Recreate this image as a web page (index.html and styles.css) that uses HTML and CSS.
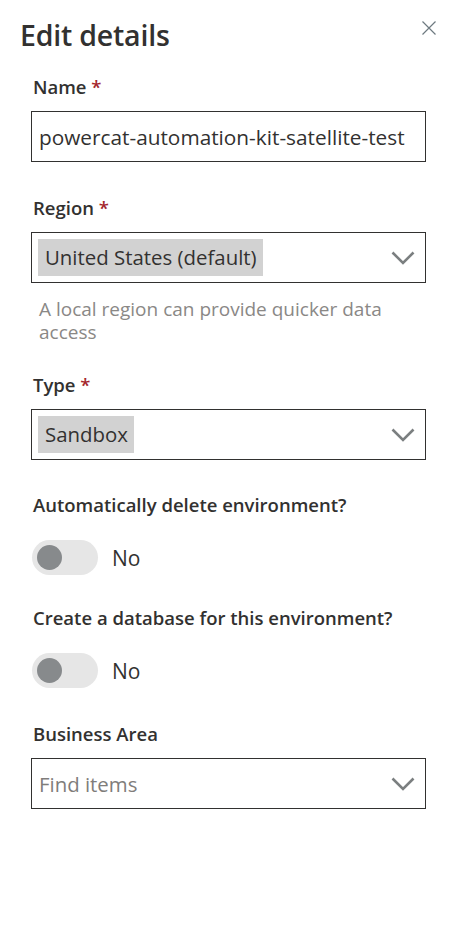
FILE: index.html
```html
<!DOCTYPE html>
<html lang="en">
<head>
<meta charset="utf-8">
<title>Edit details</title>
<link rel="stylesheet" href="styles.css">
</head>
<body>
<div class="panel">
  <div class="header">
    <h1 class="title">Edit details</h1>
    <button class="close" aria-label="Close">
      <svg width="14" height="14" viewBox="0 0 14 14"><path d="M0.5 0.5 L13.5 13.5 M13.5 0.5 L0.5 13.5" stroke="#6e7a80" stroke-width="1.2" fill="none"/></svg>
    </button>
  </div>

  <div class="field f-name">
    <div class="label">Name <span class="req">*</span></div>
    <div class="input"><span class="value">powercat-automation-kit-satellite-test</span></div>
  </div>

  <div class="field f-region">
    <div class="label">Region <span class="req">*</span></div>
    <div class="select">
      <span class="chip">United States (default)</span>
      <svg class="chev" width="24" height="14" viewBox="0 0 24 14"><path d="M1.5 1.5 L12 12 L22.5 1.5" stroke="#7b7f80" stroke-width="2.6" fill="none"/></svg>
    </div>
    <div class="help">A local region can provide quicker data access</div>
  </div>

  <div class="field f-type">
    <div class="label">Type <span class="req">*</span></div>
    <div class="select">
      <span class="chip">Sandbox</span>
      <svg class="chev" width="24" height="14" viewBox="0 0 24 14"><path d="M1.5 1.5 L12 12 L22.5 1.5" stroke="#7b7f80" stroke-width="2.6" fill="none"/></svg>
    </div>
  </div>

  <div class="field f-auto">
    <div class="label">Automatically delete environment?</div>
    <div class="toggle-row">
      <span class="toggle"><span class="knob"></span></span>
      <span class="toggle-text">No</span>
    </div>
  </div>

  <div class="field f-db">
    <div class="label">Create a database for this environment?</div>
    <div class="toggle-row">
      <span class="toggle"><span class="knob"></span></span>
      <span class="toggle-text">No</span>
    </div>
  </div>

  <div class="field f-area">
    <div class="label">Business Area</div>
    <div class="input combo">
      <span class="placeholder">Find items</span>
      <svg class="chev" width="24" height="14" viewBox="0 0 24 14"><path d="M1.5 1.5 L12 12 L22.5 1.5" stroke="#7b7f80" stroke-width="2.6" fill="none"/></svg>
    </div>
  </div>
</div>
</body>
</html>
```

FILE: styles.css
```css
html, body {
  margin: 0;
  padding: 0;
  background: #ffffff;
}
body {
  font-family: "Open Sans", "Noto Sans", sans-serif;
  color: #323130;
}
.panel {
  width: 452px;
  box-sizing: border-box;
  padding: 17px 26px 40px 31px;
}
.header {
  display: flex;
  justify-content: space-between;
  align-items: flex-start;
  margin-left: -11px;
  margin-right: -10px;
}
.title {
  margin: 0;
  font-size: 28.5px;
  line-height: 36px;
  font-weight: 600;
  color: #323130;
  letter-spacing: -0.2px;
}
.close {
  border: 0;
  background: transparent;
  padding: 0;
  margin-top: 4px;
  width: 14px;
  height: 14px;
  display: flex;
}
.field { display: flex; flex-direction: column; }
.f-name { margin-top: 22px; }
.f-region { margin-top: 34px; }
.f-type { margin-top: 29px; }
.f-auto { margin-top: 33px; }
.f-db { margin-top: 31px; }
.f-area { margin-top: 34px; }

.label {
  font-size: 18.5px;
  line-height: 24px;
  font-weight: 600;
  color: #323130;
  margin-left: 2px;
  margin-bottom: 12px;
  white-space: nowrap;
}
.req { color: #a4262c; }

.input, .select {
  box-sizing: border-box;
  height: 51px;
  border: 1px solid #323130;
  display: flex;
  align-items: center;
  color: #323130;
}
.input { padding: 0 10px 0 7px; font-size: 20.8px; }
.value { white-space: nowrap; }
.select { padding: 0 10px 0 6px; justify-content: space-between; font-size: 20.4px; }
.chip {
  background: #d2d2d2;
  line-height: 37px;
  padding: 0 6px 0 7px;
}
.combo { justify-content: space-between; font-size: 20.4px; }
.placeholder { color: #7f7d7b; }
.chev { flex: none; }

.help {
  margin-top: 15px;
  margin-left: 8px;
  font-size: 19px;
  line-height: 23px;
  color: #8a8886;
  padding-right: 30px;
}

.toggle-row {
  display: flex;
  align-items: center;
  margin-top: 11px;
  height: 35px;
}
.toggle {
  box-sizing: border-box;
  width: 66px;
  height: 35px;
  border-radius: 18px;
  background: #e6e6e6;
  display: flex;
  align-items: center;
  padding-left: 5px;
  margin-left: 1px;
}
.knob {
  width: 25px;
  height: 25px;
  border-radius: 50%;
  background: #878a8c;
}
.toggle-text {
  margin-left: 14px;
  font-size: 21px;
  color: #323130;
}
```
